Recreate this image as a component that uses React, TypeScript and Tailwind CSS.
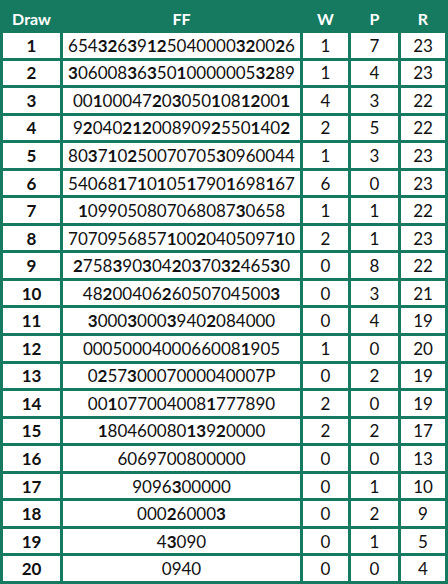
import { Fragment } from "react";

// FF strings: digits inside [] are bold
const rows: [string, number, number, number][] = [
  ["654[32]6[3]9[12]5040000[32]00[2]6", 1, 7, 23],
  ["[3]06008[3]6[3]50[1]0000005[32]89", 1, 4, 23],
  ["00[1]00047[2]0[3]050[1]08[12]00[1]", 4, 3, 22],
  ["9[2]040[212]008909[2]550[1]40[2]", 2, 5, 22],
  ["80[3]7[1]0[2]50070705[3]0960044", 1, 3, 23],
  ["54068[1]7[1]0[1]05[1]790[1]698[1]67", 6, 0, 23],
  ["[1]099050807068087[3]0658", 1, 1, 22],
  ["7070956857[1]00[2]0405097[1]0", 2, 1, 23],
  ["[2]758[3]90[3]04[2]0[3]70[32]465[3]0", 0, 8, 22],
  ["48[2]00406[2]6050704500[3]", 0, 3, 21],
  ["[3]000[3]000[3]940[2]084000", 0, 4, 19],
  ["0005000400066008[1]905", 1, 0, 20],
  ["0[2]57[3]0007000040007P", 0, 2, 19],
  ["00[1]077004008[1]777890", 2, 0, 19],
  ["[1]80460080[13]9[2]0000", 2, 2, 17],
  ["6069700800000", 0, 0, 13],
  ["9096[3]00000", 0, 1, 10],
  ["000[2]6000[3]", 0, 2, 9],
  ["4[3]090", 0, 1, 5],
  ["0940", 0, 0, 4],
];

function FF({ value }: { value: string }) {
  const parts = value.split(/(\[[^\]]+\])/).filter(Boolean);
  return (
    <>
      {parts.map((p, i) =>
        p.startsWith("[") ? (
          <b key={i} className="font-bold">
            {p.slice(1, -1)}
          </b>
        ) : (
          <span key={i}>{p}</span>
        ),
      )}
    </>
  );
}

const cell =
  "flex items-center justify-center bg-white text-[17px] leading-none text-[#111]";

export default function App() {
  return (
    <div
      className="grid h-[584px] w-[448px] grid-cols-[57px_237px_45px_47px_44px] grid-rows-[30px_repeat(20,1fr)] gap-[3px] bg-[#157a5f] px-[3px] pb-[3px]"
      style={{ fontFamily: "Lato, 'Open Sans', sans-serif" }}
    >
      {["Draw", "FF", "W", "P", "R"].map((h) => (
        <div
          key={h}
          className="flex items-center justify-center pt-[7px] text-[16px] font-bold leading-none text-white"
        >
          {h}
        </div>
      ))}
      {rows.map(([ff, w, p, r], i) => (
        <Fragment key={i}>
          <div className={`${cell} font-bold`}>{i + 1}</div>
          <div className={cell}>
            <FF value={ff} />
          </div>
          <div className={cell}>{w}</div>
          <div className={cell}>{p}</div>
          <div className={cell}>{r}</div>
        </Fragment>
      ))}
    </div>
  );
}
